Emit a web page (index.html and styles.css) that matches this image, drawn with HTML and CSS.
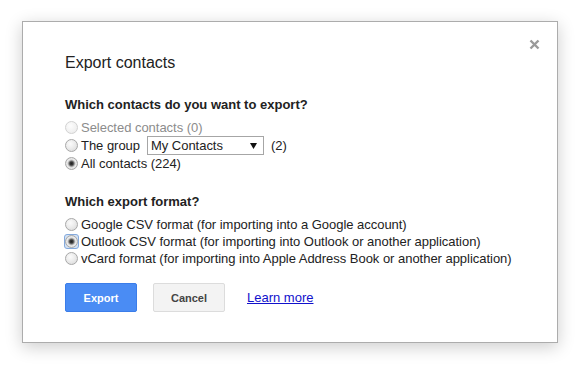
FILE: index.html
```html
<!DOCTYPE html>
<html>
<head>
<meta charset="utf-8">
<link rel="stylesheet" href="styles.css">
</head>
<body>
<div class="page">
  <div class="dialog">
    <svg class="close" width="11" height="11" viewBox="0 0 11 11"><path d="M1.5 1.5L9.5 9.5M9.5 1.5L1.5 9.5" stroke="#9a9a9a" stroke-width="2.4" fill="none"/></svg>
    <div class="title">Export contacts</div>
    <div class="heading">Which contacts do you want to export?</div>
    <div class="group first">
      <div class="row disabled"><span class="rw"><input type="radio" name="c" disabled></span><span class="label">Selected contacts (0)</span></div>
      <div class="row"><span class="rw"><input type="radio" name="c"></span><span class="label">The group</span>
        <div class="select"><span class="sel-text">My Contacts</span><svg width="7" height="6" viewBox="0 0 7 6"><path d="M0 0H7L3.5 6Z" fill="#111"/></svg></div>
        <span class="count">(2)</span></div>
      <div class="row"><span class="rw"><input type="radio" name="c" checked></span><span class="label">All contacts (224)</span></div>
    </div>
    <div class="heading h2">Which export format?</div>
    <div class="group second">
      <div class="row"><span class="rw"><input type="radio" name="f"></span><span class="label">Google CSV format (for importing into a Google account)</span></div>
      <div class="row"><span class="rw focus"><input type="radio" name="f" checked></span><span class="label">Outlook CSV format (for importing into Outlook or another application)</span></div>
      <div class="row"><span class="rw"><input type="radio" name="f"></span><span class="label">vCard format (for importing into Apple Address Book or another application)</span></div>
    </div>
    <div class="buttons">
      <button class="btn primary">Export</button>
      <button class="btn">Cancel</button>
      <a class="link" href="#">Learn more</a>
    </div>
  </div>
</div>
</body>
</html>
```
FILE: styles.css
```css
html, body {
  margin: 0;
  height: 100%;
  background: #fff;
}
body {
  font-family: "Liberation Sans", Arial, sans-serif;
  font-size: 13px;
  color: #222;
}
.page {
  padding: 21px 0 0 22px;
}
.dialog {
  position: relative;
  box-sizing: border-box;
  width: 536px;
  height: 322px;
  border: 1px solid #acacac;
  background: #fff;
  box-shadow: 0 4px 16px rgba(0, 0, 0, 0.2);
  padding: 31px 42px 0 42px;
}
.close {
  position: absolute;
  top: 17px;
  right: 17px;
}
.title {
  font-size: 16px;
  line-height: 20px;
  color: #222;
  margin-bottom: 24px;
}
.heading {
  font-weight: bold;
  line-height: 16px;
  color: #222;
}
.h2 {
  margin-top: 22px;
}
.group.first {
  margin-top: 5px;
}
.group.second {
  margin-top: 6px;
}
.row {
  display: flex;
  align-items: center;
  height: 18px;
  white-space: nowrap;
  letter-spacing: -0.03px;
}
.second .row {
  height: 17px;
}
.rw {
  box-sizing: border-box;
  width: 15px;
  height: 15px;
  border: 1px solid transparent;
  border-radius: 3px;
  display: flex;
  align-items: center;
  justify-content: center;
  margin-left: -1px;
  margin-right: 2px;
}
.rw.focus {
  border-color: #84a9dc;
  background: #d4e3f6;
}
.rw input {
  -webkit-appearance: none;
  appearance: none;
  margin: 0;
  box-sizing: border-box;
  width: 13px;
  height: 13px;
  border-radius: 50%;
  border: 1px solid #a8a8a8;
  background: radial-gradient(circle at 40% 35%, #fbfbfb 0, #ececec 45%, #d6d6d6 100%);
  flex: none;
}
.rw input:checked {
  background: radial-gradient(circle at 50% 50%, #222 0, #3a3a3a 1.5px, #777 2.5px, #c9c9c9 3.5px, #eeeeee 4.5px, #dadada 6px);
}
.rw input:disabled {
  border-color: #d2d2d2;
  background: radial-gradient(circle at 40% 35%, #fdfdfd 0, #f1f1f1 60%, #e8e8e8 100%);
}
.disabled .label {
  color: #8c8c8c;
}
.select {
  box-sizing: border-box;
  width: 117px;
  height: 19px;
  border: 1px solid #a6a6a6;
  background: #fff;
  margin-left: 7px;
  padding: 0 6px 0 3px;
  display: flex;
  align-items: center;
  justify-content: space-between;
  color: #222;
}
.select svg {
  margin-top: 1px;
}
.count {
  margin-left: 7px;
}
.buttons {
  display: flex;
  align-items: center;
  margin-top: 16px;
}
.btn {
  box-sizing: border-box;
  width: 72px;
  height: 29px;
  border: 1px solid #dcdcdc;
  border-radius: 2px;
  background: #f3f3f3;
  color: #444;
  font-family: "Liberation Sans", Arial, sans-serif;
  font-size: 11px;
  font-weight: bold;
  padding: 0;
  margin: 0 16px 0 0;
}
.btn.primary {
  background: #4a8cf4;
  border-color: #3b7de9;
  color: #fff;
}
.link {
  margin-left: 6px;
  color: #1111cc;
  text-decoration: underline;
}
```
